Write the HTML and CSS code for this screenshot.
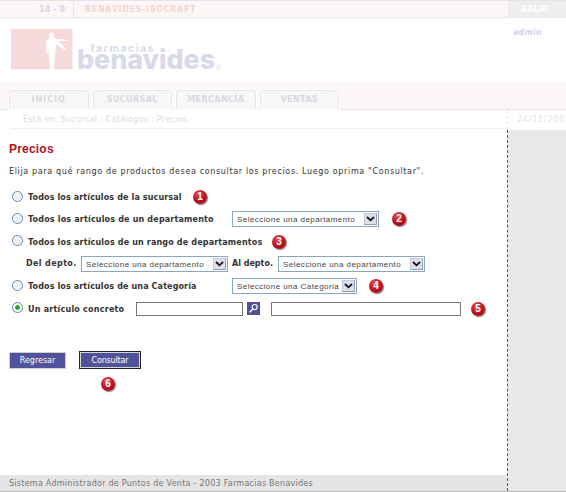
FILE: index.html
```
<!DOCTYPE html>
<html lang="es">
<head>
<meta charset="utf-8">
<title>Precios</title>
<link rel="stylesheet" href="styles.css">
</head>
<body>
<div class="app">
  <header class="topbar">
    <div class="shift"><span>14 - 9</span></div>
    <div class="store"><span>BENAVIDES-ISOCRAFT</span></div>
    <div class="logout"><span>SALIR</span></div>
  </header>
  <div class="brand">
    <svg class="logo" width="215" height="50" viewBox="0 0 215 50">
      <rect x="0" y="1" width="61.500" height="40.500" fill="#f6d9da"/>
      <circle cx="40.500" cy="7" r="2.400" fill="#fff"/>
      <path d="M39.500 9H42.500L45 11L57 11.800V13H47L55 21L54 22.500L45.500 16L44.500 24L43 40L45 41.500H38L39 39L37.500 25V18L36.500 25H35L35.500 12Z" fill="#fff"/>
      <text class="logo-small" x="79.500" y="24.300" textLength="63">farmacias</text>
      <text class="logo-big" x="66" y="41" textLength="138" lengthAdjust="spacingAndGlyphs">benavides</text>
      <circle cx="207.500" cy="39.500" r="1.700" fill="none" stroke="#e3e3ef"/>
    </svg>
    <span class="user">admin</span>
  </div>
  <nav class="tabs">
    <a class="tab wide"><span>INICIO</span></a>
    <a class="tab"><span>SUCURSAL</span></a>
    <a class="tab"><span>MERCANCÍA</span></a>
    <a class="tab"><span>VENTAS</span></a>
  </nav>
  <div class="body">
    <div class="left">
      <div class="crumbs"><span>Está en: Sucursal : Catálogos : Precios</span></div>
      <main class="content">
        <h1><span>Precios</span></h1>
        <p class="intro">Elija para qué rango de productos desea consultar los precios. Luego oprima "Consultar".</p>
        <div class="row r1"><i class="radio"></i><b class="label l1">Todos los artículos de la sucursal</b><span class="badge">1</span></div>
        <div class="row r2"><i class="radio"></i><b class="label l2">Todos los artículos de un departamento</b>
          <div class="select"><span>Seleccione una departamento</span><i class="arrow"><svg width="9" height="6" viewBox="0 0 9 6"><path d="M1 1L4.500 4.300L8 1"/></svg></i></div><span class="badge">2</span></div>
        <div class="row r3"><i class="radio"></i><b class="label l3">Todos los artículos de un rango de departamentos</b><span class="badge">3</span></div>
        <div class="row range"><b class="label from">Del depto.</b>
          <div class="select"><span>Seleccione una departamento</span><i class="arrow"><svg width="9" height="6" viewBox="0 0 9 6"><path d="M1 1L4.500 4.300L8 1"/></svg></i></div>
          <b class="label to">Al depto.</b>
          <div class="select"><span>Seleccione una departamento</span><i class="arrow"><svg width="9" height="6" viewBox="0 0 9 6"><path d="M1 1L4.500 4.300L8 1"/></svg></i></div></div>
        <div class="row r4"><i class="radio"></i><b class="label l4">Todos los artículos de una Categoría</b>
          <div class="select short"><span>Seleccione una Categoria</span><i class="arrow"><svg width="9" height="6" viewBox="0 0 9 6"><path d="M1 1L4.500 4.300L8 1"/></svg></i></div><span class="badge">4</span></div>
        <div class="row r5"><i class="radio on"></i><b class="label l5">Un artículo concreto</b>
          <div class="field code"></div>
          <svg class="lookup" width="13" height="13" viewBox="0 0 13 13"><rect width="13" height="13" fill="#50539a"/><circle cx="7.700" cy="5" r="2.500" fill="none" stroke="#fff" stroke-width="1.200"/><path d="M5.900 7L2.700 10.200" stroke="#fff" stroke-width="1.500"/></svg>
          <div class="field desc"></div><span class="badge">5</span></div>
        <div class="actions"><div class="btn"><span>Regresar</span></div><div class="btn primary"><span>Consultar</span></div></div>
        <div class="mark6"><span class="badge">6</span></div>
      </main>
      <footer class="footer"><span>Sistema Administrador de Puntos de Venta - 2003 Farmacias Benavides</span></footer>
    </div>
    <aside class="side"><div class="date"><span>24/11/200</span></div><div class="panel"></div></aside>
  </div>
</div>
</body>
</html>
```
FILE: styles.css
```
* { box-sizing: border-box; }
body { margin: 0; background: #fff; font: 8px/10px "DejaVu Sans", sans-serif; color: #333; }
.app { width: 566px; height: 492px; overflow: hidden; display: flex; flex-direction: column; border-bottom: 1px solid #b9b8bb; white-space: nowrap; }
.app > * { flex: none; }
.topbar { height: 18px; display: flex; background: #fcf7f6; border-top: 1px solid #e7e3eb; border-bottom: 1px solid #ebe9ee; font-weight: bold; line-height: 17px; }
.shift { width: 74px; padding-left: 39px; border-right: 1px solid #e3e2ee; color: #d4d6e9; letter-spacing: .1px; }
.store { flex: 1; padding-left: 11px; color: #f4d5d5; letter-spacing: .68px; }
.logout { width: 58px; padding-left: 13px; background: #eee; color: #fff; letter-spacing: .3px; }
.brand { height: 64px; padding: 10px 0 0 11px; display: flex; }
.logo { flex: none; }
.logo-small { font: bold 10.500px Inter, sans-serif; fill: #dadbeb; }
.logo-big { font: 800 27px Inter, sans-serif; fill: #d8d9ea; }
.user { margin-left: 287px; color: #d4d5ea; font-weight: bold; line-height: 9px; letter-spacing: .2px; }
.tabs { height: 28px; padding: 8px 0 0 9px; display: flex; gap: 4px; background: #fcf7f6; border-bottom: 1px solid #e7e5ea; }
.tab { width: 79.500px; height: 19px; border: 1px solid #e7e7e9; border-bottom: 0; border-radius: 4px 4px 0 0; background: #f7f7f7; box-shadow: 0 0 0 1px #fff; color: #d8d9e3; font-weight: bold; line-height: 18px; text-align: center; letter-spacing: .4px; }
.wide { letter-spacing: 1px; }
.body { flex: 1; display: flex; min-height: 0; }
.left { width: 507px; display: flex; flex-direction: column; }
.crumbs { height: 19px; margin-left: 11px; padding-left: 12px; border-bottom: 1px solid #f2f1f8; line-height: 20px; color: #ddd; letter-spacing: .29px; }
.content { flex: 1; padding: 13px 0 0 9px; }
h1 { margin: 0; font: bold 12px/14px "Liberation Sans", sans-serif; color: #b5121b; letter-spacing: .2px; }
.intro { margin: 11px 0 0; line-height: 10px; letter-spacing: .65px; }
.row { display: flex; align-items: center; height: 22px; }
.r1 { margin-top: 9px; }
.r3, .r5 { height: 23px; }
.radio { flex: none; width: 11px; height: 11px; margin: -2px 5px 0 3px; border: 1px solid #5d83ae; border-radius: 50%; background: #eef0f1; box-shadow: inset 0 0 0 1px #fff; }
.on { background: radial-gradient(circle, #24a52a 0 2px, #fff 2.700px); }
.label { flex: none; line-height: 10px; padding-top: 2px; }
.l1 { width: 165px; letter-spacing: .13px; }
.l2, .l4 { width: 204px; letter-spacing: .18px; }
.l4 { letter-spacing: .13px; }
.l3 { width: 244px; letter-spacing: .16px; }
.l5 { width: 108px; letter-spacing: .23px; }
.badge { flex: none; width: 14px; height: 14px; border-radius: 50%; background: radial-gradient(circle at 38% 28%, #e04b52, #bd101d 55%, #8d0710); box-shadow: 1px 1px 1px #777; color: #fff; font: bold 10px/14px "Liberation Sans", sans-serif; text-align: center; }
.select { flex: none; width: 147px; height: 16px; padding: 1px; display: flex; justify-content: space-between; border: 1px solid #87a7c3; background: #fff; font: 8px/13px "Liberation Sans", sans-serif; color: #444; letter-spacing: .44px; }
.select span { padding-left: 3px; }
.short { width: 125px; }
.select + .badge { margin-left: 13px; }
.short + .badge { margin-left: 12px; }
.arrow { width: 13px; height: 12px; display: flex; align-items: center; justify-content: center; background: #dddfec; border: 1px solid #c5c7da; border-right-color: #9a9bb2; border-bottom-color: #9a9bb2; }
.arrow path { fill: none; stroke: #111; stroke-width: 1.800; }
.from { width: 55px; margin-left: 17px; padding-top: 0; letter-spacing: .38px; }
.to { width: 50px; padding: 0 0 0 4px; letter-spacing: 0; }
.field { flex: none; height: 14px; border: 1px solid #777; background: #fff; }
.code { width: 107px; }
.desc { width: 190px; }
.lookup { flex: none; margin: 0 11px 0 4px; }
.field + .badge { margin-left: 10px; }
.actions { margin-top: 31px; display: flex; align-items: center; gap: 13px; }
.btn { width: 57px; height: 17px; border: 1px solid #cfcfcf; background: #50539a; color: #fff; font: 8px/15px "DejaVu Sans", sans-serif; text-align: center; letter-spacing: 0; }
.primary { width: 62px; height: 18px; border: 1px solid #222; box-shadow: inset 0 0 0 1px #d5d5d5; line-height: 17px; letter-spacing: -.15px; }
.mark6 { margin: 8px 0 0 92px; }
.mark6 .badge { display: block; }
.footer { height: 16px; padding-left: 9px; background: #e5e5e5; color: #777; line-height: 17px; letter-spacing: .26px; }
.side { width: 59px; display: flex; flex-direction: column; }
.date { height: 20px; padding-left: 9px; border-left: 1px dashed #e2e2e6; color: #e3e3e3; line-height: 20px; letter-spacing: .75px; }
.panel { flex: 1; border-left: 1px dashed #555; background: #eae8eb; background-clip: padding-box; }
```
